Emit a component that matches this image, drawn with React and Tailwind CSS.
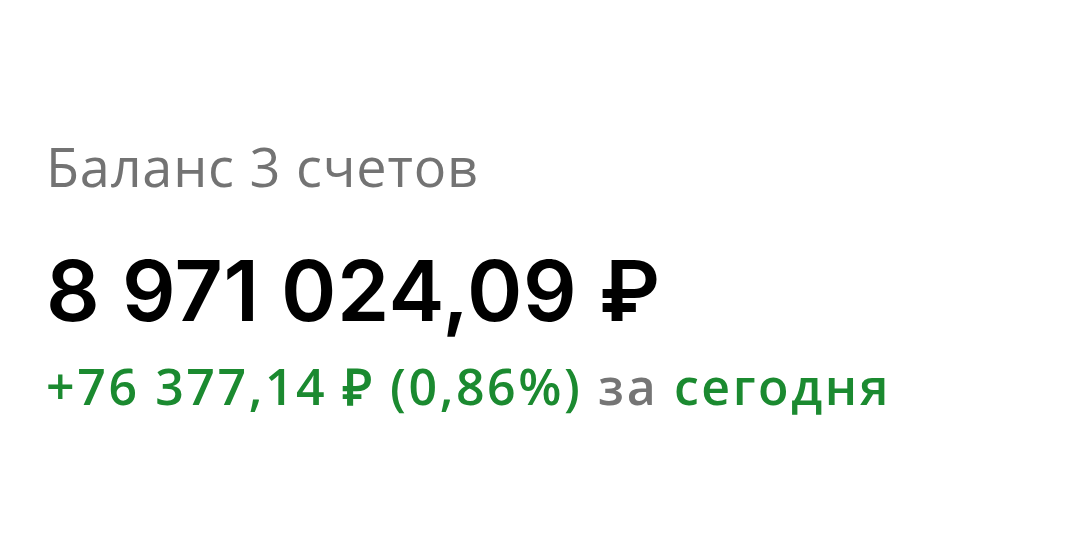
import React from 'react';

const App = () => {
  return (
    <div className="w-[1080px] h-[555px] bg-white pl-[46px] pt-[134px] flex flex-col font-['Open_Sans',sans-serif]">
      <h2 className="text-[54px] leading-[64px] font-medium tracking-[0.8px] text-[#737373]">
        Баланс 3 счетов
      </h2>
      <div className="mt-[48px] text-[84px] leading-[90px] font-semibold text-black tracking-[0.5px] font-['Inter',sans-serif]">
        8 971 024,09 ₽
      </div>
      <div className="mt-[22px] text-[50px] leading-[56px] font-semibold tracking-[2.6px] text-[#1b8a30]">
        +76 377,14 ₽ (0,86%) <span className="text-[#757575]">за</span> сегодня
      </div>
    </div>
  );
};

export default App;
